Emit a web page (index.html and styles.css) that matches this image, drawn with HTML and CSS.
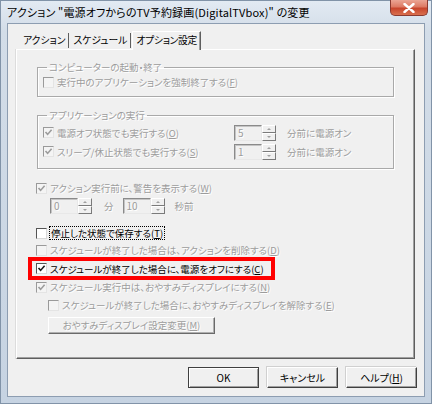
FILE: index.html
```html
<!DOCTYPE html>
<html lang="ja">
<head>
<meta charset="utf-8">
<link rel="stylesheet" href="styles.css">
</head>
<body>
<div class="window">
  <div class="titlebar">
    <span class="title">アクション "電源オフからのTV予約録画(DigitalTVbox)" の変更</span>
    <div class="close">
      <svg width="12" height="10" viewBox="0 0 12 10"><path d="M1.5 1 L10.5 9 M10.5 1 L1.5 9" stroke="#fff" stroke-width="2.4" stroke-linecap="round"/></svg>
    </div>
  </div>
  <div class="client">
    <div class="tabs">
      <span class="tab first">アクション</span>
      <span class="tab">スケジュール</span>
      <span class="tab active">オプション設定</span>
    </div>
    <div class="panel">
      <fieldset class="group g1">
        <legend class="dis">コンピューターの起動・終了</legend>
        <div class="row dis"><span class="cb"></span><span>実行中のアプリケーションを強制終了する(<u>F</u>)</span></div>
      </fieldset>

      <fieldset class="group g2">
        <legend class="dis">アプリケーションの実行</legend>
        <div class="row tall dis">
          <div class="row-left"><span class="cb"><svg width="9" height="9" viewBox="0 0 9 9"><path d="M1.5 4 L3.6 6.4 L7.6 1.8" fill="none" stroke="#9c9c9c" stroke-width="1.6"/></svg></span><span>電源オフ状態でも実行する(<u>O</u>)</span></div>
          <span class="spin"><span class="spin-box">5</span><span class="spin-btns"><span class="up"></span><span class="down"></span></span></span>
          <span class="after">分前に電源オン</span>
        </div>
        <div class="row tall dis">
          <div class="row-left"><span class="cb"><svg width="9" height="9" viewBox="0 0 9 9"><path d="M1.5 4 L3.6 6.4 L7.6 1.8" fill="none" stroke="#9c9c9c" stroke-width="1.6"/></svg></span><span>スリープ/休止状態でも実行する(<u>S</u>)</span></div>
          <span class="spin"><span class="spin-box">1</span><span class="spin-btns"><span class="up"></span><span class="down"></span></span></span>
          <span class="after">分前に電源オン</span>
        </div>
      </fieldset>

      <div class="row dis warn"><span class="cb"><svg width="9" height="9" viewBox="0 0 9 9"><path d="M1.5 4 L3.6 6.4 L7.6 1.8" fill="none" stroke="#9c9c9c" stroke-width="1.6"/></svg></span><span>アクション実行前に、警告を表示する(<u>W</u>)</span></div>
      <div class="row dis spinrow">
        <span class="spin"><span class="spin-box">0</span><span class="spin-btns"><span class="up"></span><span class="down"></span></span></span>
        <span class="unit">分</span>
        <span class="spin"><span class="spin-box">10</span><span class="spin-btns"><span class="up"></span><span class="down"></span></span></span>
        <span class="unit2">秒前</span>
      </div>

      <div class="row stop"><span class="cb en"></span><span class="focus">停止した状態で保存する(<u>T</u>)</span></div>
      <div class="row dis del"><span class="cb"></span><span>スケジュールが終了した場合は、アクションを削除する(<u>D</u>)</span></div>
      <div class="highlight">
        <div class="row"><span class="cb en"><svg width="9" height="9" viewBox="0 0 9 9"><path d="M1.5 4 L3.6 6.4 L7.6 1.8" fill="none" stroke="#1a1a1a" stroke-width="1.6"/></svg></span><span>スケジュールが終了した場合に、電源をオフにする(<u>C</u>)</span></div>
      </div>
      <div class="row dis"><span class="cb"><svg width="9" height="9" viewBox="0 0 9 9"><path d="M1.5 4 L3.6 6.4 L7.6 1.8" fill="none" stroke="#9c9c9c" stroke-width="1.6"/></svg></span><span>スケジュール実行中は、おやすみディスプレイにする(<u>N</u>)</span></div>
      <div class="row dis sub"><span class="cb"></span><span>スケジュールが終了した場合に、おやすみディスプレイを解除する(<u>E</u>)</span></div>
      <div class="sub-btn dis">おやすみディスプレイ設定変更(<u>M</u>)</div>
    </div>
    <div class="buttons">
      <span class="btn default">OK</span>
      <span class="btn">キャンセル</span>
      <span class="btn">ヘルプ(<u>H</u>)</span>
    </div>
  </div>
</div>
</body>
</html>
```

FILE: styles.css
```css
* { box-sizing: border-box; }
html, body { margin: 0; padding: 0; }
body {
  width: 432px;
  height: 404px;
  overflow: hidden;
  font-family: "Noto Sans CJK JP", "Noto Sans", sans-serif;
  font-size: 9.5px;
  font-feature-settings: "palt";
  color: #000;
  background: #c9d7e6;
}
.window {
  width: 432px;
  height: 404px;
  border: 1px solid #8193a8;
  background: linear-gradient(#e2eaf3 0, #d3dde8 30px, #c6d3e2 100%);
  display: flex;
  flex-direction: column;
}
.titlebar {
  height: 22px;
  display: flex;
  justify-content: space-between;
  align-items: flex-start;
  padding-left: 6px;
}
.title {
  font-size: 11px;
  line-height: 20px;
  margin-top: 1px;
  letter-spacing: 0.15px;
}
.close {
  width: 38px;
  height: 16px;
  margin-right: 3px;
  margin-top: -1px;
  border: 1px solid #8a3a30;
  border-top: none;
  border-radius: 0 0 5px 5px;
  background: linear-gradient(#eba594 0, #dd7a64 45%, #c8452c 55%, #d9704e 100%);
  display: flex;
  align-items: center;
  justify-content: center;
}
.client {
  margin: 0 6px 6px 6px;
  flex: 1;
  border: 1px solid #8d9db1;
  background: #f0f0f0;
  padding: 7px 0 0 0;
  display: flex;
  flex-direction: column;
}
.tabs {
  display: flex;
  align-items: flex-end;
  height: 18px;
  margin-left: 8px;
  position: relative;
  z-index: 1;
}
.tab {
  height: 15px;
  line-height: 14px;
  font-size: 9.8px;
  padding: 0 3px 0 4px;
  border-right: 1px solid #5e5e5e;
  margin-bottom: 1px;
}
.tab.first { padding-left: 7px; }
.tab.active {
  height: 19px;
  line-height: 16px;
  margin-bottom: -1px;
  padding: 0 3px 0 3px;
  letter-spacing: -0.3px;
  border-top: 1px solid #fff;
  border-left: 1px solid #fff;
  border-right: 1px solid #5e5e5e;
  box-shadow: inset -1px 0 0 #a0a0a0;
  background: #f0f0f0;
  margin-left: 1px;
}
.panel {
  margin: 0 9px 0 8px;
  height: 310px;
  border-top: 1px solid #fff;
  border-left: 1px solid #fff;
  border-right: 1px solid #5e5e5e;
  border-bottom: 1px solid #5e5e5e;
  box-shadow: inset -1px -1px 0 #a0a0a0, -1px 0 0 #dcdcdc;
  padding: 10px 0 0 19px;
  display: flex;
  flex-direction: column;
  align-items: flex-start;
}
.group {
  margin: 0 0 0 1px;
  width: 357px;
  padding: 1px 0 7px 5px;
  border: 1px solid #a9a9a9;
  box-shadow: 1px 1px 0 #fff, inset 1px 1px 0 #fff;
  min-inline-size: 0;
}
.group legend {
  margin-left: 4px;
  padding: 0 2px;
  line-height: 14px;
  font-size: 9.5px;
}
.g2 { margin-top: 11px; }
.row {
  display: flex;
  align-items: center;
  height: 14px;
  line-height: 14px;
  white-space: nowrap;
}
.row.tall { height: 19px; }
.row-left {
  width: 191px;
  display: flex;
  align-items: center;
}
.dis {
  color: #9c9c9c;
  text-shadow: 1px 1px 0 #fff;
}
.cb {
  width: 11px;
  height: 11px;
  flex: none;
  margin-right: 3px;
  border: 1px solid;
  border-color: #9a9a9a #e4e4e4 #e4e4e4 #9a9a9a;
  background: #f4f4f4;
  display: flex;
  align-items: center;
  justify-content: center;
}
.cb.en {
  border-color: #555 #d8d8d8 #d8d8d8 #555;
  background: #fff;
}
.spin {
  display: flex;
  height: 16px;
  flex: none;
}
.spin-box {
  width: 28px;
  height: 16px;
  border: 1px solid;
  border-color: #8a8a8a #e8e8e8 #e8e8e8 #8a8a8a;
  box-shadow: inset 1px 1px 0 #c4c4c4;
  background: #f0f0f0;
  padding-left: 3px;
  line-height: 13px;
  font-size: 10px;
}
.spin-btns {
  width: 14px;
  height: 16px;
  display: flex;
  flex-direction: column;
}
.spin-btns span {
  flex: 1;
  border: 1px solid;
  border-color: #fff #7a7a7a #7a7a7a #fff;
  background: #f0f0f0;
  display: flex;
  align-items: center;
  justify-content: center;
}
.spin-btns .up::after {
  content: "";
  border-left: 2px solid transparent;
  border-right: 2px solid transparent;
  border-bottom: 2px solid #a0a0a0;
}
.spin-btns .down::after {
  content: "";
  border-left: 2px solid transparent;
  border-right: 2px solid transparent;
  border-top: 2px solid #a0a0a0;
}
.after { margin-left: 11px; }
.warn { margin-top: 12px; }
.spinrow {
  margin-top: 2px;
  height: 17px;
  padding-left: 14px;
}
.unit { margin: 0 9px 0 12px; }
.unit2 { margin-left: 10px; }
.stop { margin-top: 12px; }
.focus {
  outline: 1px dotted #000;
  outline-offset: 0;
  padding: 0 1px;
  line-height: 12px;
}
.del { margin-top: 3px; }
.highlight {
  width: 247px;
  height: 23px;
  margin-left: -8px;
  border: 4px solid #ff0000;
  padding: 0 0 0 4px;
  display: flex;
  align-items: center;
}
.sub { margin-top: 4px; margin-left: 12px; }
.sub-btn {
  margin: 5px 0 0 12px;
  width: 167px;
  height: 17px;
  line-height: 15px;
  text-align: center;
  border: 1px solid;
  border-color: #fff #6a6a6a #6a6a6a #fff;
  box-shadow: inset -1px -1px 0 #b0b0b0;
  background: #f0f0f0;
}
.buttons {
  display: flex;
  justify-content: flex-end;
  gap: 8px;
  padding: 8px 7px 0 0;
}
.btn {
  width: 71px;
  height: 21px;
  line-height: 19px;
  text-align: center;
  font-size: 10px;
  border: 1px solid;
  border-color: #fff #404040 #404040 #fff;
  box-shadow: inset -1px -1px 0 #a0a0a0, -1px -1px 0 #d0d0d0;
  background: #f0f0f0;
}
.btn.default {
  border-color: #404040;
  box-shadow: inset 1px 1px 0 #fff, inset -1px -1px 0 #a0a0a0;
}
```
